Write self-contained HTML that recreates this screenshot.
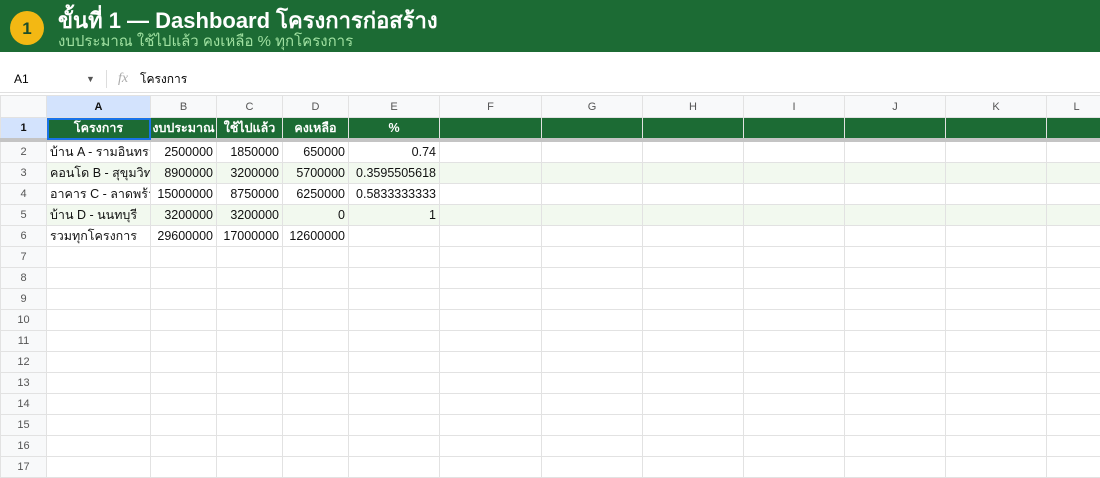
<!DOCTYPE html><html><head><meta charset="utf-8"><style>
body{margin:0;width:1100px;height:472px;overflow:hidden;background:#fff;font-family:"Liberation Sans","Noto Sans CJK SC",sans-serif;position:relative}
.ban{position:absolute;left:0;top:0;width:1100px;height:52px;background:#1c6b34}
.c{position:absolute;left:10px;top:11px;width:34px;height:34px;border-radius:50%;background:#f3b813;color:#1c4d2a;font-size:17px;font-weight:bold;text-align:center;line-height:36px}
.t{position:absolute;left:58px;top:8px;color:#fff;font-size:22px;font-weight:bold;line-height:26px;white-space:nowrap}
.s{position:absolute;left:58px;top:33px;color:#9fe0a0;font-size:15px;line-height:18px;white-space:nowrap}
.fb{position:absolute;top:66px;height:26px;font-size:12px;line-height:26px}
table{position:absolute;left:0;top:95px;width:1106px;border-collapse:collapse;table-layout:fixed;font-size:12.5px}
td{border:1px solid #e2e2e2;height:20px;padding:0 3px;white-space:nowrap;overflow:hidden;color:#111}
td.h{background:#f8f9fa;color:#555;text-align:center;font-size:11px}
tr.ch td{background:#f8f9fa;color:#555;text-align:center;font-size:11px;height:21px}
.r{text-align:right}
tr.g td.d{background:#f2f9ef}
tr.hd td.d{background:#1c6b34;color:#fff;font-weight:bold;text-align:center}
tr.hd td{border-bottom:4px solid #c4c4c4}
</style></head><body>
<div class="ban"><div class="c">1</div><div class="t">ขั้นที่ 1 — Dashboard โครงการก่อสร้าง</div><div class="s">งบประมาณ ใช้ไปแล้ว คงเหลือ % ทุกโครงการ</div></div>
<div class="fb" style="left:14px">A1</div>
<div class="fb" style="left:86px;font-size:9px;color:#555">▼</div>
<div style="position:absolute;left:106px;top:70px;width:1px;height:18px;background:#ddd"></div>
<div class="fb" style="left:118px;color:#aaa;font-style:italic;font-family:'Liberation Serif',serif;font-size:14px">fx</div>
<div class="fb" style="left:140px">โครงการ</div>
<div style="position:absolute;left:0;top:92px;width:1100px;height:1px;background:#e0e0e0"></div>
<table>
<colgroup><col style="width:46px"><col style="width:104px"><col style="width:66px"><col style="width:66px"><col style="width:66px"><col style="width:91px"><col style="width:102px"><col style="width:101px"><col style="width:101px"><col style="width:101px"><col style="width:101px"><col style="width:101px"><col style="width:60px"></colgroup>
<tr class="ch"><td></td><td style="background:#d3e3fd;color:#111;font-weight:bold">A</td><td>B</td><td>C</td><td>D</td><td>E</td><td>F</td><td>G</td><td>H</td><td>I</td><td>J</td><td>K</td><td>L</td></tr>
<tr class="hd"><td class="h" style="background:#d3e3fd;color:#111;font-weight:bold">1</td><td class="d" style="outline:2px solid #1a73e8;outline-offset:-2px">โครงการ</td><td class="d" style="padding:0">งบประมาณ</td><td class="d">ใช้ไปแล้ว</td><td class="d">คงเหลือ</td><td class="d">%</td><td class="d"></td><td class="d"></td><td class="d"></td><td class="d"></td><td class="d"></td><td class="d"></td><td class="d"></td></tr>
<tr><td class="h">2</td><td class="d">บ้าน A - รามอินทรา</td><td class="d r">2500000</td><td class="d r">1850000</td><td class="d r">650000</td><td class="d r">0.74</td><td class="d"></td><td></td><td></td><td></td><td></td><td></td><td></td></tr>
<tr class="g"><td class="h">3</td><td class="d">คอนโด B - สุขุมวิท</td><td class="d r">8900000</td><td class="d r">3200000</td><td class="d r">5700000</td><td class="d r">0.3595505618</td><td class="d"></td><td class="d"></td><td class="d"></td><td class="d"></td><td class="d"></td><td class="d"></td><td class="d"></td></tr>
<tr><td class="h">4</td><td class="d">อาคาร C - ลาดพร้าว</td><td class="d r">15000000</td><td class="d r">8750000</td><td class="d r">6250000</td><td class="d r">0.5833333333</td><td></td><td></td><td></td><td></td><td></td><td></td><td></td></tr>
<tr class="g"><td class="h">5</td><td class="d">บ้าน D - นนทบุรี</td><td class="d r">3200000</td><td class="d r">3200000</td><td class="d r">0</td><td class="d r">1</td><td class="d"></td><td class="d"></td><td class="d"></td><td class="d"></td><td class="d"></td><td class="d"></td><td class="d"></td></tr>
<tr><td class="h">6</td><td>รวมทุกโครงการ</td><td class="r">29600000</td><td class="r">17000000</td><td class="r">12600000</td><td></td><td></td><td></td><td></td><td></td><td></td><td></td><td></td></tr>
<tr><td class="h">7</td><td></td><td></td><td></td><td></td><td></td><td></td><td></td><td></td><td></td><td></td><td></td><td></td></tr>
<tr><td class="h">8</td><td></td><td></td><td></td><td></td><td></td><td></td><td></td><td></td><td></td><td></td><td></td><td></td></tr>
<tr><td class="h">9</td><td></td><td></td><td></td><td></td><td></td><td></td><td></td><td></td><td></td><td></td><td></td><td></td></tr>
<tr><td class="h">10</td><td></td><td></td><td></td><td></td><td></td><td></td><td></td><td></td><td></td><td></td><td></td><td></td></tr>
<tr><td class="h">11</td><td></td><td></td><td></td><td></td><td></td><td></td><td></td><td></td><td></td><td></td><td></td><td></td></tr>
<tr><td class="h">12</td><td></td><td></td><td></td><td></td><td></td><td></td><td></td><td></td><td></td><td></td><td></td><td></td></tr>
<tr><td class="h">13</td><td></td><td></td><td></td><td></td><td></td><td></td><td></td><td></td><td></td><td></td><td></td><td></td></tr>
<tr><td class="h">14</td><td></td><td></td><td></td><td></td><td></td><td></td><td></td><td></td><td></td><td></td><td></td><td></td></tr>
<tr><td class="h">15</td><td></td><td></td><td></td><td></td><td></td><td></td><td></td><td></td><td></td><td></td><td></td><td></td></tr>
<tr><td class="h">16</td><td></td><td></td><td></td><td></td><td></td><td></td><td></td><td></td><td></td><td></td><td></td><td></td></tr>
<tr><td class="h">17</td><td></td><td></td><td></td><td></td><td></td><td></td><td></td><td></td><td></td><td></td><td></td><td></td></tr>
</table>
</body></html>
